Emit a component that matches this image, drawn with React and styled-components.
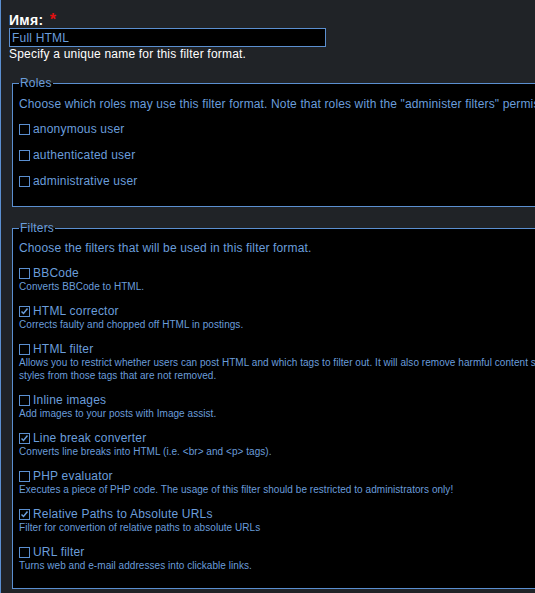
import React from 'react';
import styled, {createGlobalStyle} from 'styled-components'

const GlobalStyle = createGlobalStyle`
  html, body {
    margin: 0;
    padding: 0;
    background: #202327;
    overflow: hidden;
  }
`;

const Page = styled.div`
  box-sizing: border-box;
  width: 900px;
  height: 593px;
  overflow: hidden;
  border-left: 1px solid #5b8fd0;
  padding: 12px 0 0 8px;
  background: #202327;
  font-family: "Liberation Sans", Arial, sans-serif;
  color: #6a9ddb;
`;

const FieldLabel = styled.label`
  display: block;
  font-size: 14px;
  line-height: 16px;
  font-weight: bold;
  color: #fff;
  letter-spacing: 0.3px;
`;

const Required = styled.span`
  color: #e01010;
  margin-left: 2px;
  font-size: 16px;
`;

const TextInput = styled.input`
  display: block;
  box-sizing: border-box;
  width: 317px;
  height: 19px;
  margin: 0;
  padding: 0 2px;
  border: 1px solid #5b8fd0;
  background: #000;
  color: #6a9ddb;
  font-family: inherit;
  font-size: 12px;
  letter-spacing: 0.2px;
  outline: none;
`;

const Hint = styled.div`
  font-size: 12px;
  line-height: 14px;
  color: #fff;
  letter-spacing: 0.2px;
`;

const Fieldset = styled.fieldset`
  margin: ${p => p.$top}px 0 0 3px;
  padding: ${p => p.$pad}px 6px ${p => p.$bottom}px 6px;
  border: 1px solid #5b8fd0;
  border-right: none;
  background: #000;
`;

const Legend = styled.legend`
  padding: 0 1px;
  font-size: 12px;
  line-height: 14px;
  letter-spacing: 0.2px;
`;

const Intro = styled.div`
  font-size: 12px;
  line-height: 14px;
  letter-spacing: 0.14px;
  white-space: nowrap;
`;

const RoleList = styled.div`
  display: flex;
  flex-direction: column;
  gap: 13px;
  margin-top: 12px;
`;

const FilterList = styled.div`
  display: flex;
  flex-direction: column;
  gap: 12px;
  margin-top: 12px;
`;

const Option = styled.label`
  display: flex;
  align-items: flex-start;
  gap: 3px;
  font-size: 12px;
  line-height: 13px;
  letter-spacing: 0.2px;
  white-space: nowrap;
`;

const Box = styled.span`
  box-sizing: border-box;
  flex: none;
  width: 11px;
  height: 11px;
  margin-top: 1px;
  border: 1px solid #5b8fd0;
  background: #000;
  display: flex;
  align-items: center;
  justify-content: center;

  svg {
    display: block;
  }
`;

const Desc = styled.div`
  font-size: 10px;
  line-height: 13px;
  letter-spacing: 0.05px;
  white-space: nowrap;
`;

const Check = ({checked}) => (
  <Box>
    {checked && (
      <svg width="9" height="9" viewBox="0 0 9 9">
        <polyline points="1.5,4.5 3.5,6.5 7.5,1.5" fill="none" stroke="#6a9ddb" strokeWidth="1.5"/>
      </svg>
    )}
  </Box>
);

const roles = ['anonymous user', 'authenticated user', 'administrative user'];

const filters = [
  {name: 'BBCode', desc: ['Converts BBCode to HTML.']},
  {name: 'HTML corrector', checked: true, desc: ['Corrects faulty and chopped off HTML in postings.']},
  {name: 'HTML filter', desc: [
    'Allows you to restrict whether users can post HTML and which tags to filter out. It will also remove harmful content such as JavaScript events, JavaScript URLs and CSS',
    'styles from those tags that are not removed.'
  ]},
  {name: 'Inline images', desc: ['Add images to your posts with Image assist.']},
  {name: 'Line break converter', checked: true, desc: ['Converts line breaks into HTML (i.e. <br> and <p> tags).']},
  {name: 'PHP evaluator', desc: ['Executes a piece of PHP code. The usage of this filter should be restricted to administrators only!']},
  {name: 'Relative Paths to Absolute URLs', checked: true, desc: ['Filter for convertion of relative paths to absolute URLs']},
  {name: 'URL filter', desc: ['Turns web and e-mail addresses into clickable links.']},
];

export default function App() {
  return (
    <>
      <GlobalStyle/>
      <Page>
        <FieldLabel htmlFor="name">Имя: <Required>*</Required></FieldLabel>
        <TextInput id="name" defaultValue="Full HTML"/>
        <Hint>Specify a unique name for this filter format.</Hint>

        <Fieldset $top={15} $pad={7} $bottom={18}>
          <Legend>Roles</Legend>
          <Intro>Choose which roles may use this filter format. Note that roles with the "administer filters" permission can always use all filter formats.</Intro>
          <RoleList>
            {roles.map(r => (
              <Option key={r}><Check/>{r}</Option>
            ))}
          </RoleList>
        </Fieldset>

        <Fieldset $top={14} $pad={6} $bottom={16}>
          <Legend>Filters</Legend>
          <Intro>Choose the filters that will be used in this filter format.</Intro>
          <FilterList>
            {filters.map(f => (
              <div key={f.name}>
                <Option><Check checked={f.checked}/>{f.name}</Option>
                {f.desc.map((d, i) => <Desc key={i}>{d}</Desc>)}
              </div>
            ))}
          </FilterList>
        </Fieldset>
      </Page>
    </>
  );
}
